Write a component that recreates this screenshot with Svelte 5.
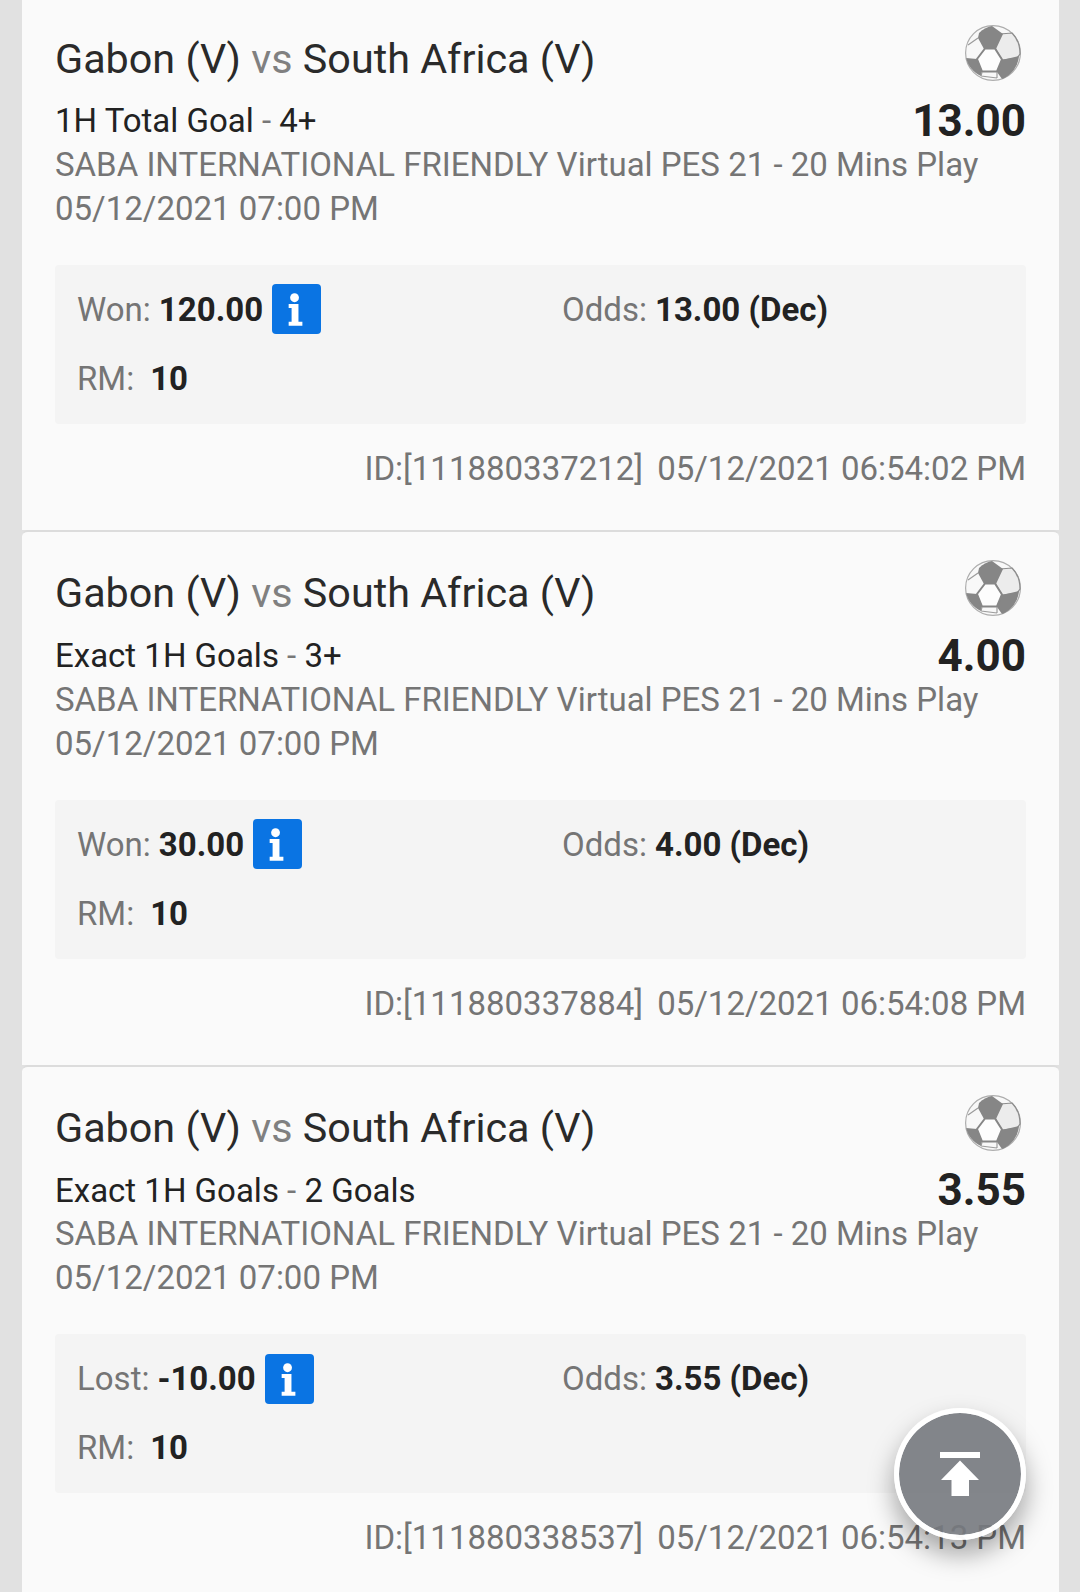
<script lang="ts">
  const bets = [
    { market: '1H Total Goal', pick: '4+', price: '13.00', result: 'Won:', amount: '120.00', id: '111880337212', time: '06:54:02' },
    { market: 'Exact 1H Goals', pick: '3+', price: '4.00', result: 'Won:', amount: '30.00', id: '111880337884', time: '06:54:08' },
    { market: 'Exact 1H Goals', pick: '2 Goals', price: '3.55', result: 'Lost:', amount: '-10.00', id: '111880338537', time: '06:54:13' }
  ];
</script>

<main class="page">
  {#each bets as bet}
    <section class="card">
      <div class="head">
        <h2 class="teams">Gabon (V) <span class="vs">vs</span> South Africa (V)</h2>
        <svg class="ball" viewBox="0 0 56 56" aria-hidden="true">
          <circle cx="28" cy="28" r="27.4" fill="#f8f8f8" stroke="#adadad" stroke-width="1.2"/>
          <path d="M35 9 L47 8 C52 13 55 20 55 29 L52 33 L37 35 L30 23 Z" fill="#ececec" stroke="#8c8c8c" stroke-width="1.2"/>
          <path d="M14 8 C18 4 23 1.5 27 1 L38 9 L31 24 L19 24 L13 13 Z" fill="#868686"/>
          <path d="M1.2 33 L12 34 L17 47 L16 51 C8 47 3 41 1.2 33 Z" fill="#868686"/>
          <path d="M37 35 L54 31 C53 41 47 50 37 54 L32 47 Z" fill="#868686"/>
          <path d="M12 34 L20 23.5 L30 23.5 L37 34.5 L32 46.5 L17 46.5 Z" fill="#fdfdfd" stroke="#868686" stroke-width="2" stroke-linejoin="round"/>
          <path d="M13 13 L3 20 M16 51 L32 53 M32 47 L32 53 M17 47 L16 51" fill="none" stroke="#9c9c9c" stroke-width="1.2"/>
        </svg>
      </div>
      <div class="pick-row">
        <div class="pick">{bet.market} <span class="dash">-</span> {bet.pick}</div>
        <div class="price">{bet.price}</div>
      </div>
      <div class="league">SABA INTERNATIONAL FRIENDLY Virtual PES 21 - 20 Mins Play</div>
      <div class="league">05/12/2021 07:00 PM</div>
      <div class="stats">
        <div class="stat-row">
          <div class="cell">
            <span class="lbl">{bet.result}</span>
            <b>{bet.amount}</b>
            <span class="info">
              <svg viewBox="0 0 50 50" aria-hidden="true">
                <circle cx="23" cy="13.5" r="4.5" fill="#fff"/>
                <path d="M17 20 H27 V38 H31 V42 H17 V38 H20 V24 H17 Z" fill="#fff"/>
              </svg>
            </span>
          </div>
          <div class="cell"><span class="lbl">Odds:</span> <b>{bet.price} (Dec)</b></div>
        </div>
        <div class="stat-row">
          <div class="cell rm"><span class="lbl">RM:</span> <b>10</b></div>
        </div>
      </div>
      <div class="stamp"><span>ID:[{bet.id}]</span><span>05/12/2021 {bet.time} PM</span></div>
    </section>
  {/each}

  <button type="button" class="top" aria-label="Back to top">
    <svg viewBox="0 0 40 44" aria-hidden="true">
      <rect x="0" y="0" width="40" height="6" fill="#fff"/>
      <path d="M20 8.5 L39 28 H29 V44 H11.5 V28 H1 Z" fill="#fff"/>
    </svg>
  </button>
</main>

<style>
  :global(body) { margin: 0; background: #e1e1e1; }
  .page {
    position: relative;
    width: 1037px;
    height: 1592px;
    margin-left: 22px;
    overflow: hidden;
    font-family: Roboto, "Liberation Sans", sans-serif;
    color: #222;
  }
  .card {
    box-sizing: border-box;
    height: 534.5px;
    padding: 27px 33px 0 33px;
    background: #fafafa;
    border-top: 2px solid #dcdcdc;
    border-radius: 6px 6px 0 0;
  }
  .card:first-child { height: 530px; padding-top: 24px; border-top: 0; border-radius: 0; }
  .card:first-child .teams { margin-top: 12px; }
  .head { display: flex; justify-content: space-between; align-items: flex-start; height: 75px; }
  .teams { margin: 11px 0 0; font-size: 41.3px; line-height: 46px; font-weight: 400; color: #2a2a2a; }
  .vs { color: #808080; }
  .ball { width: 56px; height: 56px; margin: 1px 5px 0 0; }
  .pick-row { display: flex; justify-content: space-between; align-items: center; height: 43.5px; }
  .pick { font-size: 33px; color: #222; }
  .dash { color: #777; }
  .price { font-size: 44px; font-weight: 700; color: #222; }
  .league { font-size: 33px; line-height: 44px; color: #757575; }
  .stats {
    margin-top: 34px;
    height: 159px;
    box-sizing: border-box;
    padding: 10px 22px 0;
    background: #f4f4f4;
    border-radius: 4px;
  }
  .stat-row { display: flex; height: 69px; align-items: center; }
  .cell { display: flex; flex: none; align-items: center; gap: 8px; width: 430px; font-size: 33px; }
  .stat-row .cell:first-child { width: 485px; }
  .rm { gap: 16px; }
  .lbl { color: #757575; }
  .cell b { color: #222; font-weight: 700; }
  .info {
    width: 49px;
    height: 50px;
    margin-left: 1px;
    background: #0a74e3;
    border-radius: 4px;
  }
  .info svg { display: block; width: 100%; height: 100%; }
  .stamp { display: flex; justify-content: flex-end; gap: 14px; margin-top: 23px; font-size: 33px; line-height: 44px; color: #757575; }
  .top {
    position: absolute;
    left: 872px;
    top: 1408px;
    width: 132px;
    height: 132px;
    padding: 0;
    display: grid;
    place-items: center;
    background: rgba(118, 121, 126, .9);
    background-clip: padding-box;
    border: 5px solid rgba(255, 255, 255, .96);
    border-radius: 50%;
    box-shadow: 0 14px 26px rgba(0,0,0,.35);
  }
  .top svg { width: 40px; height: 44px; }
</style>
